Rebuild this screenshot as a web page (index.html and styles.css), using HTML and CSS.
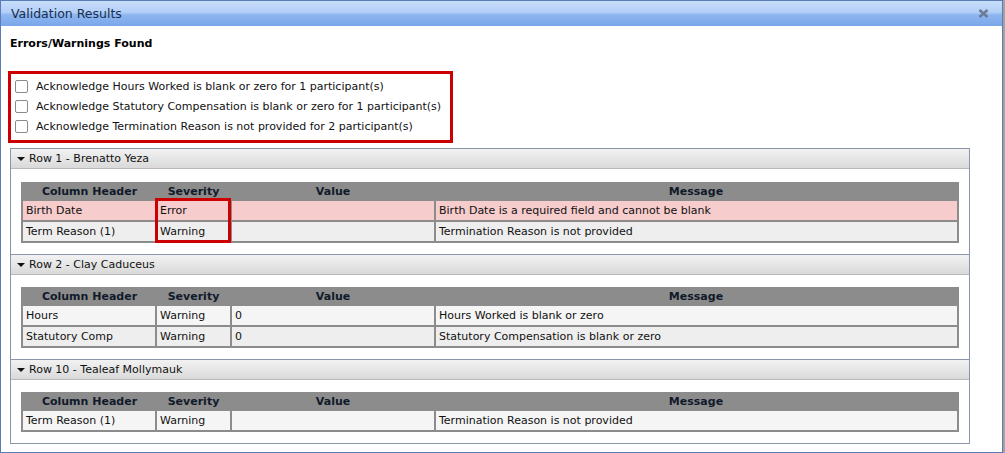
FILE: index.html
```html
<!DOCTYPE html>
<html lang="en">
<head>
    <meta charset="UTF-8">
    <title>Validation Results</title>
    <link rel="stylesheet" href="styles.css">
</head>
<body>
    <div class="dialog">
        <div class="titlebar">
            <span class="title">Validation Results</span>
            <svg class="close" width="11" height="9" viewBox="0 0 11 9">
                <path d="M1.5 1 L9.5 8 M9.5 1 L1.5 8" stroke="#6b7b96" stroke-width="2.6"/>
            </svg>
        </div>
        <div class="content">
            <h2>Errors/Warnings Found</h2>
            <div class="acks">
                <label class="ack"><span class="cb"></span>Acknowledge Hours Worked is blank or zero for 1 participant(s)</label>
                <label class="ack"><span class="cb"></span>Acknowledge Statutory Compensation is blank or zero for 1 participant(s)</label>
                <label class="ack"><span class="cb"></span>Acknowledge Termination Reason is not provided for 2 participant(s)</label>
            </div>

            <div class="sections">
                <div class="section">
                    <div class="sechead"><span class="caret"></span>Row 1 - Brenatto Yeza</div>
                    <div class="secbody">
                        <table>
                            <tr><th class="c1">Column Header</th><th class="c2">Severity</th><th class="c3">Value</th><th>Message</th></tr>
                            <tr class="err"><td>Birth Date</td><td>Error</td><td></td><td>Birth Date is a required field and cannot be blank</td></tr>
                            <tr class="alt"><td>Term Reason (1)</td><td>Warning</td><td></td><td>Termination Reason is not provided</td></tr>
                        </table>
                        <div class="mark"></div>
                    </div>
                </div>
                <div class="section">
                    <div class="sechead"><span class="caret"></span>Row 2 - Clay Caduceus</div>
                    <div class="secbody">
                        <table>
                            <tr><th class="c1">Column Header</th><th class="c2">Severity</th><th class="c3">Value</th><th>Message</th></tr>
                            <tr><td>Hours</td><td>Warning</td><td>0</td><td>Hours Worked is blank or zero</td></tr>
                            <tr class="alt"><td>Statutory Comp</td><td>Warning</td><td>0</td><td>Statutory Compensation is blank or zero</td></tr>
                        </table>
                    </div>
                </div>
                <div class="section">
                    <div class="sechead"><span class="caret"></span>Row 10 - Tealeaf Mollymauk</div>
                    <div class="secbody">
                        <table>
                            <tr><th class="c1">Column Header</th><th class="c2">Severity</th><th class="c3">Value</th><th>Message</th></tr>
                            <tr><td>Term Reason (1)</td><td>Warning</td><td></td><td>Termination Reason is not provided</td></tr>
                        </table>
                    </div>
                </div>
            </div>
        </div>
    </div>
</body>
</html>
```

FILE: styles.css
```css
*{
    margin: 0;
    padding: 0;
    box-sizing: border-box;
}
body{
    background-color: #a3a3a3;
    font-family: "DejaVu Sans", Verdana, sans-serif;
    font-size: 11px;
    color: #111;
}
.dialog{
    width: 1003px;
    height: 453px;
    background-color: white;
    border: 1px solid #5b7bb5;
}
.titlebar{
    height: 25px;
    background: linear-gradient(#c7ddfb, #b3cff7 45%, #8fb6f0 55%, #7aa6ea);
    display: flex;
    align-items: center;
    justify-content: space-between;
    padding: 0 13px 0 10px;
}
.title{
    font-size: 12.5px;
    color: #16304f;
}
.close{
    margin-top: -1px;
}
.content{
    padding: 11px 9px 0 9px;
}
h2{
    font-size: 11px;
    font-weight: bold;
    color: #000;
    height: 34px;
}
.acks{
    width: 445px;
    border: 3px solid #cc0000;
    padding: 2px 0 4px 4px;
    margin-left: -2px;
}
.ack{
    display: flex;
    align-items: center;
    height: 20px;
    color: #111;
}
.cb{
    width: 13px;
    height: 13px;
    border: 1px solid #8a8a8a;
    border-radius: 2px;
    background-color: white;
    margin-right: 8px;
}
.sections{
    margin-top: 5px;
    width: 960px;
    border: 1px solid #8b95aa;
}
.section + .section{
    border-top: 1px solid #8b95aa;
}
.sechead{
    height: 20px;
    background: linear-gradient(#f2f2f2, #e6e6e6 50%, #d9d9d9);
    border-bottom: 1px solid #b9b9b9;
    display: flex;
    align-items: center;
    padding-left: 6px;
    color: #111;
}
.caret{
    width: 0;
    height: 0;
    border-left: 4px solid transparent;
    border-right: 4px solid transparent;
    border-top: 4px solid #111;
    margin-right: 4px;
}
.secbody{
    padding: 13px 10px 11px 10px;
    position: relative;
}
.section + .section .secbody{
    padding-top: 12px;
}
table{
    width: 938px;
    border-collapse: collapse;
    border: 2px solid #8c8c8c;
}
th{
    background-color: #8c8c8c;
    font-weight: bold;
    color: #111a2a;
    height: 17px;
    text-align: center;
    padding: 0;
}
.c1{ width: 134px; }
.c2{ width: 75px; }
.c3{ width: 204px; }
td{
    border: 2px solid #8c8c8c;
    background-color: #f5f5f5;
    height: 21px;
    padding: 0 3px;
}
tr.alt td{
    background-color: #eeeeee;
}
tr.err td{
    background-color: #f6cccc;
}
.mark{
    position: absolute;
    left: 144px;
    top: 29px;
    width: 76px;
    height: 45px;
    border: 3px solid #cc0000;
}
```
